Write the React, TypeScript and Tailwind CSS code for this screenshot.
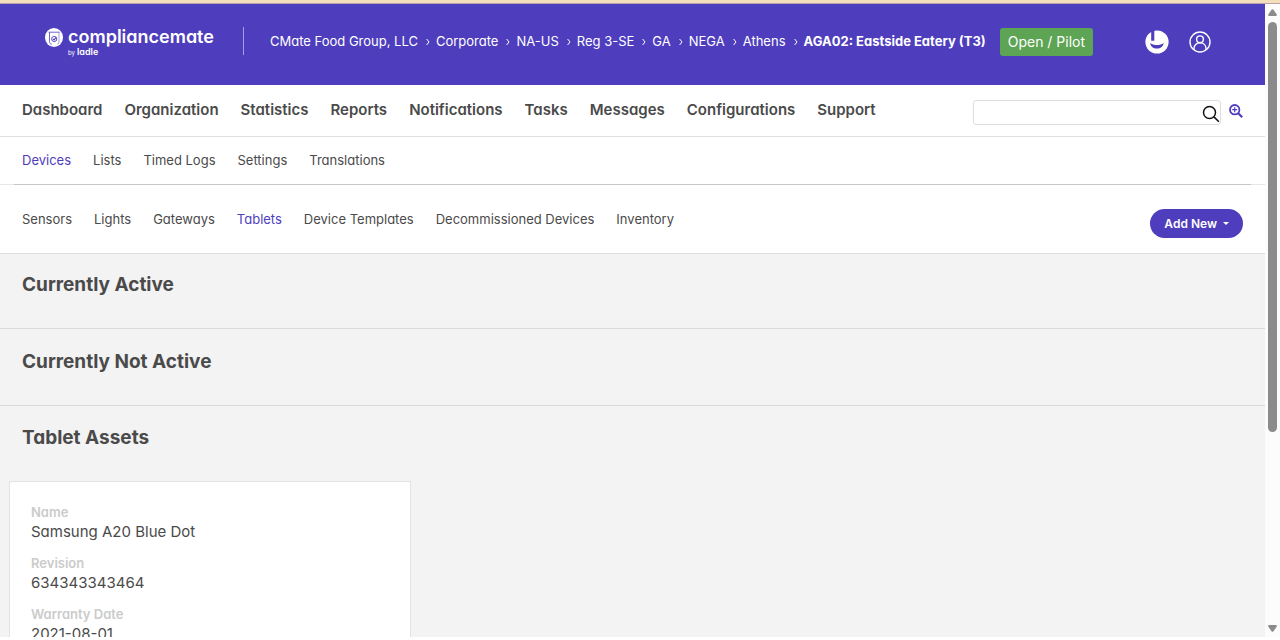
import React from "react";

const crumbs = ["CMate Food Group, LLC", "Corporate", "NA-US", "Reg 3-SE", "GA", "NEGA", "Athens"];
const mainNav = [
  "Dashboard",
  "Organization",
  "Statistics",
  "Reports",
  "Notifications",
  "Tasks",
  "Messages",
  "Configurations",
  "Support",
];
const subNav = ["Devices", "Lists", "Timed Logs", "Settings", "Translations"];
const deviceNav = [
  "Sensors",
  "Lights",
  "Gateways",
  "Tablets",
  "Device Templates",
  "Decommissioned Devices",
  "Inventory",
];
const asset = [
  { label: "Name", value: "Samsung A20 Blue Dot" },
  { label: "Revision", value: "634343343464" },
  { label: "Warranty Date", value: "2021-08-01" },
];

function Logo() {
  return (
    <a href="#home" className="flex items-start gap-[5px] text-white">
      <svg viewBox="0 0 18 19" className="mt-[3px] h-[19px] w-[18px]" aria-hidden="true">
        <ellipse cx="9" cy="9.5" rx="9" ry="9.4" fill="#fff" />
        <path d="M3.4 4.2h11.2M4.5 4.4v9.2c0 1.700.9 2.600 2.400 2.600" fill="none" stroke="#4e3dbd" strokeWidth="0.8" />
        <path d="M14 4.400v9.200c0 1.500-.6 2.300-1.700 2.600" fill="none" stroke="#4e3dbd" strokeWidth="0.5" />
        <circle cx="9.2" cy="11" r="2.6" fill="none" stroke="#4e3dbd" strokeWidth="0.9" />
        <path d="M8 10.900l1 1 2.200-2.500" fill="none" stroke="#4e3dbd" strokeWidth="1.1" />
      </svg>
      <span className="flex flex-col pt-[2px]">
        <span className="text-lg leading-5 font-semibold">compliancemate</span>
        <span className="flex items-baseline gap-[2px] leading-[10px]">
          <span className="text-[6px]">by</span>
          <span className="text-[9px] font-semibold">ladle</span>
        </span>
      </span>
    </a>
  );
}

function Breadcrumbs() {
  return (
    <nav aria-label="Breadcrumb" className="flex items-center text-[13px] whitespace-nowrap text-white">
      {crumbs.map((c) => (
        <React.Fragment key={c}>
          <a href="#crumb">{c}</a>
          <svg viewBox="0 0 4 8" className="mr-[6px] ml-2 h-2 w-1" aria-hidden="true">
            <path d="M0.6 1l2.400 3-2.400 3" fill="none" stroke="#fff" strokeWidth="1" />
          </svg>
        </React.Fragment>
      ))}
      <a href="#site" className="font-bold">
        AGA02: Eastside Eatery (T3)
      </a>
    </nav>
  );
}

function Header() {
  return (
    <header className="flex h-[81px] shrink-0 items-start bg-[#4e3dbd] pt-[21px] pr-[54px] pl-[45px]">
      <Logo />
      <div className="mt-[2px] ml-[29px] h-7 w-px bg-[#a79ee0]" />
      <div className="ml-[26px] flex h-[34px] items-center">
        <Breadcrumbs />
        <span className="ml-[14px] rounded-[3px] bg-[#5da454] px-2 py-1 text-[14px] leading-5 whitespace-nowrap text-white">
          Open / Pilot
        </span>
      </div>
      <div className="ml-auto flex h-[34px] items-center gap-5">
        <button aria-label="Ladle" className="block">
          <svg viewBox="0 0 24 24" className="size-6">
            <circle cx="12" cy="12" r="11.6" fill="#fff" />
            <path d="M6.200 1.400 9.300 0v10.800H6.200z" fill="#4e3dbd" />
            <path d="M5.200 12.900c1.800 1.500 4 2.100 6.700 2.100s4.900-.6 6.700-2.100c-.2 3.400-3 5.600-6.700 5.600s-6.500-2.200-6.700-5.600z" fill="#4e3dbd" />
          </svg>
        </button>
        <button aria-label="Account" className="block">
          <svg viewBox="0 0 22 22" className="size-[22px]" fill="none" stroke="#fff" strokeWidth="1.4">
            <circle cx="11" cy="11" r="10" />
            <circle cx="11" cy="8.300" r="3.400" />
            <path d="M5 18.800v-1.300c0-3.300 2.500-5.700 6-5.700s6 2.400 6 5.700v1.300" />
          </svg>
        </button>
      </div>
    </header>
  );
}

function MainNav() {
  return (
    <div className="flex h-[52px] shrink-0 items-start justify-between border-b border-[#e0e0e0] px-[22px]">
      <nav aria-label="Main" className="flex h-[50px] items-center gap-[22px] text-[15px] font-semibold whitespace-nowrap">
        {mainNav.map((n) => (
          <a key={n} href="#main">
            {n}
          </a>
        ))}
      </nav>
      <form className="flex items-start gap-2 pt-[15px]">
        <div className="relative">
          <input
            aria-label="Search"
            className="block h-[25px] w-[248px] rounded-[3px] border border-[#dedede] bg-white px-2 text-[13px] outline-none"
          />
          <button type="button" aria-label="Submit search" className="absolute top-[5px] right-px">
            <svg viewBox="0 0 18 18" className="size-[18px]" fill="none" stroke="#111" strokeWidth="1.500">
              <circle cx="7.500" cy="7.500" r="6" />
              <path d="M11.900 11.900l5 4.900" />
            </svg>
          </button>
        </div>
        <button type="button" aria-label="Advanced search" className="mt-1">
          <svg viewBox="0 0 14 14" className="size-[14px]" fill="none" stroke="#4e3dbd">
            <circle cx="5.700" cy="5.700" r="4.700" strokeWidth="1.800" />
            <path d="M9.200 9.200l4 4" strokeWidth="2.200" />
            <path d="M5.700 3.200v5M3.200 5.700h5" strokeWidth="1.200" />
          </svg>
        </button>
      </form>
    </div>
  );
}

function LinkRow({ label, items, active }: { label: string; items: string[]; active: string }) {
  return (
    <nav aria-label={label} className="flex gap-[22px] text-[13px] leading-5 whitespace-nowrap">
      {items.map((n) => (
        <a key={n} href="#section" className={n === active ? "text-[#4e3dbd]" : ""}>
          {n}
        </a>
      ))}
    </nav>
  );
}

function Scrollbar() {
  return (
    <div aria-hidden="true" className="flex w-[15px] flex-col items-center bg-[#fcfcfc] py-[5px]">
      <svg viewBox="0 0 9 7" className="h-[7px] w-[9px]">
        <path d="M3.700.6Q4.500-.2 5.300.6L8.800 5.600Q9 7 7.800 7H1.200Q0 7 .2 5.600z" fill="#8b8b8b" />
      </svg>
      <div className="mt-[6px] flex w-[9px] flex-1 flex-col">
        <div className="h-[68%] rounded-full bg-[#8b8b8b]" />
      </div>
      <svg viewBox="0 0 9 7" className="h-[7px] w-[9px]">
        <path d="M3.700 6.400Q4.500 7.200 5.300 6.400L8.800 1.400Q9 0 7.800 0H1.200Q0 0 .2 1.400z" fill="#8b8b8b" />
      </svg>
    </div>
  );
}

export default function App() {
  return (
    <div className="flex h-screen flex-col overflow-hidden bg-white pb-[3px] font-['Inter','Liberation_Sans',sans-serif] text-[#4a4a4a] [font-feature-settings:'cv11']">
      <div className="h-1 shrink-0 border-b border-[#b9a3a8] bg-[#f5debc]" />
      <div className="flex min-h-0 flex-1">
        <div className="flex min-w-0 flex-1 flex-col overflow-hidden">
          <Header />
          <MainNav />
          <div className="flex h-[47px] shrink-0 items-center px-[22px] pb-px">
            <LinkRow label="Configuration" items={subNav} active="Devices" />
          </div>
          <div className="shrink-0 bg-[#e6e6e6] px-[14px]">
            <div className="h-px bg-[#c6c6c6]" />
          </div>
          <div className="flex h-[69px] shrink-0 items-start justify-between border-b border-[#dedede] px-[22px]">
            <div className="pt-6">
              <LinkRow label="Devices" items={deviceNav} active="Tablets" />
            </div>
            <button className="mt-6 flex h-[29px] items-center gap-[6px] rounded-full bg-[#4e3dbd] px-[14px] text-[12px] font-semibold whitespace-nowrap text-white">
              Add New
              <svg viewBox="0 0 6 3" className="h-[3px] w-[6px]" aria-hidden="true">
                <path d="M0 0h6L3 3z" fill="#fff" />
              </svg>
            </button>
          </div>
          <main className="flex-1 bg-[#f3f3f3]">
            <section className="h-[75px] border-b border-[#dadada] px-[22px] pt-[18px]">
              <h2 className="text-[19px] leading-[26px] font-bold">Currently Active</h2>
            </section>
            <section className="h-[77px] border-b border-[#dadada] px-[22px] pt-[20px]">
              <h2 className="text-[19px] leading-[26px] font-bold">Currently Not Active</h2>
            </section>
            <section className="pt-[19px]">
              <h2 className="px-[22px] text-[19px] leading-[26px] font-bold">Tablet Assets</h2>
              <dl className="mt-[30px] ml-[9px] w-[402px] border border-[#e3e3e3] bg-white px-[21px] pt-[21px] pb-5">
                {asset.map((f) => (
                  <div key={f.label} className="mb-3">
                    <dt className="text-[13px] leading-[18px] font-semibold text-[#cbcbcb]">{f.label}</dt>
                    <dd className="text-[15px] leading-[21px]">{f.value}</dd>
                  </div>
                ))}
              </dl>
            </section>
          </main>
        </div>
        <Scrollbar />
      </div>
    </div>
  );
}
